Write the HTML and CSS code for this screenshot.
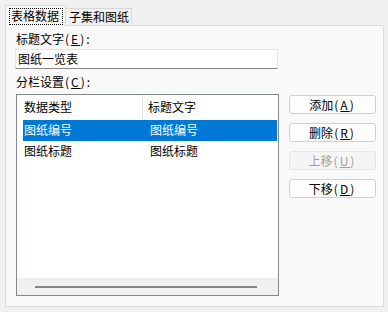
FILE: index.html
```html
<!DOCTYPE html>
<html lang="zh-CN">
<head>
  <meta charset="UTF-8" />
  <meta name="viewport" content="width=device-width, initial-scale=1.0" />
  <title>表格数据</title>
  <link rel="stylesheet" href="styles.css">
</head>
<body>
  <div class="dialog">
    <div class="tabs">
      <div class="tab active"><span class="focus">表格数据</span></div>
      <div class="tab">子集和图纸</div>
    </div>
    <div class="panel">
      <div class="label">标题文字<span class="p">(<u>E</u>)</span>:</div>
      <div class="textbox">图纸一览表</div>
      <div class="label label-cols">分栏设置<span class="p">(<u>C</u>)</span>:</div>
      <div class="columns">
        <div class="listbox">
          <div class="list-head">
            <div class="head-cell first">数据类型</div>
            <div class="head-cell">标题文字</div>
          </div>
          <div class="list-body">
            <div class="row selected">
              <div class="cell first">图纸编号</div>
              <div class="cell">图纸编号</div>
            </div>
            <div class="row">
              <div class="cell first">图纸标题</div>
              <div class="cell">图纸标题</div>
            </div>
          </div>
          <div class="hscroll"><div class="thumb"></div></div>
        </div>
        <div class="buttons">
          <button>添加<span class="p">(<u>A</u>)</span></button>
          <button>删除<span class="p">(<u>R</u>)</span></button>
          <button disabled>上移<span class="p">(<u>U</u>)</span></button>
          <button>下移<span class="p">(<u>D</u>)</span></button>
        </div>
      </div>
    </div>
  </div>
</body>
</html>
```

FILE: styles.css
```css
body {
  margin: 0;
  width: 388px;
  height: 312px;
  background: #f0f0f0;
  font-family: "Noto Sans CJK SC", "Noto Sans", sans-serif;
  font-size: 12px;
  color: #000;
}
u {
  text-decoration: underline;
  text-underline-offset: 1px;
}
.p {
  letter-spacing: 2px;
  padding-left: 1px;
}
.dialog {
  padding: 5px 0 0 5px;
}
.tabs {
  display: flex;
  align-items: flex-end;
  height: 20px;
  position: relative;
  z-index: 1;
  white-space: nowrap;
}
.tab {
  height: 17px;
  line-height: 16px;
  padding: 0 3px;
  border: 1px solid #d9d9d9;
  border-bottom: none;
  border-left: none;
  background: #f0f0f0;
  box-sizing: border-box;
  width: 66px;
}
.tab.active {
  height: 21px;
  width: 61px;
  border-left: 1px solid #d9d9d9;
  background: #f9f9f9;
  padding: 2px 2px 0 3px;
  margin-bottom: -1px;
}
.focus {
  display: block;
  border: 1px dotted #000;
  height: 15px;
  line-height: 14px;
  padding: 0 1px;
}
.panel {
  width: 379px;
  height: 282px;
  box-sizing: border-box;
  border: 1px solid #dcdcdc;
  background: #f9f9f9;
  padding: 5px 0 0 10px;
}
.label {
  line-height: 16px;
  height: 16px;
}
.label-cols {
  margin-top: 5px;
}
.textbox {
  margin: 2px 0 0 -1px;
  width: 263px;
  height: 20px;
  box-sizing: border-box;
  background: #fff;
  border: 1px solid #e3e3e3;
  border-bottom-color: #868686;
  line-height: 18px;
  padding-left: 2px;
}
.columns {
  display: flex;
  gap: 10px;
  margin-top: 4px;
}
.listbox {
  width: 263px;
  height: 202px;
  flex: none;
  box-sizing: border-box;
  border: 1px solid #828790;
  background: #fff;
  display: flex;
  flex-direction: column;
}
.list-head {
  display: flex;
  height: 25px;
}
.head-cell {
  line-height: 24px;
  padding-left: 5px;
}
.head-cell.first {
  width: 126px;
  box-sizing: border-box;
  padding-left: 7px;
  border-right: 1px solid #e5e5e5;
}
.list-body {
  flex: 1;
}
.row {
  display: flex;
  height: 21px;
  line-height: 20px;
  margin: 0 1px 0 6px;
}
.row.selected {
  background: #0078d7;
  color: #fff;
}
.cell {
  padding-left: 6px;
}
.cell.first {
  width: 120px;
  padding-left: 1px;
}
.hscroll {
  height: 17px;
  background: #f0f0f0;
  display: flex;
  align-items: center;
  padding-left: 18px;
}
.thumb {
  width: 222px;
  height: 2px;
  background: #858585;
}
.buttons {
  display: flex;
  flex-direction: column;
  gap: 9px;
  margin-top: 1px;
}
button {
  width: 87px;
  height: 19px;
  padding: 0;
  font-family: inherit;
  font-size: 12px;
  line-height: 17px;
  color: #000;
  background: #fdfdfd;
  border: 1px solid #d0d0d0;
  border-radius: 3px;
}
button:disabled {
  color: #a0a0a0;
  background: #f5f5f5;
  border-color: #e5e5e5;
}
```
